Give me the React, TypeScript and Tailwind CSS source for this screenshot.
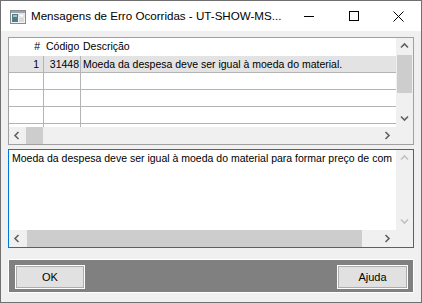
import React from "react";

const FONT = "font-['Liberation_Sans',Arial,sans-serif]";

type Dir = "up" | "down" | "left" | "right";

function Chevron({ dir, disabled = false }: { dir: Dir; disabled?: boolean }) {
  const color = disabled ? "#c1c1c1" : "#606060";
  const paths: Record<Dir, string> = {
    up: "M1 5.5 L4.5 2 L8 5.5",
    down: "M1 2.5 L4.5 6 L8 2.5",
    left: "M5.5 1 L2 4.5 L5.5 8",
    right: "M2.5 1 L6 4.5 L2.5 8",
  };
  return (
    <svg width="9" height="9" viewBox="0 0 9 9" aria-hidden>
      <path d={paths[dir]} fill="none" stroke={color} strokeWidth="1.6" />
    </svg>
  );
}

function ArrowBox({ dir, disabled }: { dir: Dir; disabled?: boolean }) {
  return (
    <div className="flex h-[17px] w-[17px] shrink-0 items-center justify-center">
      <Chevron dir={dir} disabled={disabled} />
    </div>
  );
}

function AppIcon() {
  return (
    <svg width="16" height="14" viewBox="0 0 16 14" aria-hidden>
      <rect x="0.5" y="0.5" width="15" height="13" fill="#f4f4f4" stroke="#8a8a8a" />
      <rect x="1" y="1" width="14" height="2" fill="#9aa4ad" />
      <rect x="2" y="4" width="6" height="8" fill="#4f7f86" />
      <rect x="3" y="5" width="4" height="2" fill="#9fc0c4" />
      <rect x="9" y="4" width="5" height="3" fill="#ffffff" stroke="#b8b8b8" strokeWidth="0.5" />
      <rect x="9" y="8" width="5" height="4" fill="#d9d9d9" />
    </svg>
  );
}

const rows = [
  { n: "1", code: "31448", desc: "Moeda da despesa deve ser igual à moeda do material." },
  null,
  null,
  null,
  null,
];

export default function App() {
  return (
    <div
      className={`flex h-[303px] w-[422px] flex-col border border-[#707070] bg-[#f0f0f0] text-black ${FONT}`}
    >
      {/* barra de título */}
      <div className="flex h-[30px] shrink-0 items-center bg-white">
        <div className="pl-[9px] pt-[1px]">
          <AppIcon />
        </div>
        <span className="ml-[5px] flex-1 whitespace-nowrap text-[11.6px]">
          Mensagens de Erro Ocorridas - UT-SHOW-MS...
        </span>
        <div className="flex h-[29px] w-[45px] items-center justify-center">
          <div className="h-px w-[10px] bg-black" />
        </div>
        <div className="flex h-[29px] w-[45px] items-center justify-center">
          <div className="h-[10px] w-[10px] border border-black" />
        </div>
        <div className="flex h-[29px] w-[45px] items-center justify-center">
          <svg width="11" height="11" viewBox="0 0 11 11" aria-hidden>
            <path d="M0.5 0.5 L10.5 10.5 M10.5 0.5 L0.5 10.5" stroke="#000" strokeWidth="1" />
          </svg>
        </div>
      </div>

      <div className="flex flex-1 flex-col px-[7px] pt-[6px]">
        {/* grade de erros */}
        <div className="flex h-[108px] shrink-0 border border-[#a0a0a0] bg-white text-[10.5px]">
          <div className="flex min-w-0 flex-1 flex-col">
            <div className="flex-1 overflow-hidden">
              <div className="flex h-[18px] items-center">
                <div className="w-[35px] pr-[4px] text-right">#</div>
                <div className="w-[37px] pl-[2px]">Código</div>
                <div className="flex-1 pl-[2px]">Descrição</div>
              </div>
              {rows.map((r, i) => (
                <div
                  key={i}
                  className={`flex h-[17px] items-center border-b border-[#b4b4b4] ${
                    r ? "bg-[#e3e3e3]" : ""
                  }`}
                >
                  <div className="h-full w-[35px] border-r border-[#b4b4b4] pr-[4px] text-right leading-[16px]">
                    {r?.n}
                  </div>
                  <div className="h-full w-[37px] border-r border-[#b4b4b4] pr-[1px] text-right leading-[16px]">
                    {r?.code}
                  </div>
                  <div className="h-full flex-1 whitespace-nowrap pl-[2px] leading-[16px]">
                    {r?.desc}
                  </div>
                </div>
              ))}
            </div>
            <div className="flex h-[17px] shrink-0 bg-[#f0f0f0]">
              <ArrowBox dir="left" />
              <div className="h-[17px] w-[17px] bg-[#cdcdcd]" />
              <div className="flex-1" />
              <ArrowBox dir="right" />
            </div>
          </div>
          <div className="flex w-[17px] shrink-0 flex-col bg-[#f0f0f0]">
            <ArrowBox dir="up" />
            <div className="mx-[1px] h-[38px] bg-[#cdcdcd]" />
            <div className="flex-1" />
            <ArrowBox dir="down" />
            <div className="h-[17px]" />
          </div>
        </div>

        {/* memo com a mensagem */}
        <div className="mt-[4px] flex h-[99px] shrink-0 border border-[#0078d7] bg-white text-[10.5px]">
          <div className="flex min-w-0 flex-1 flex-col">
            <div className="flex-1 overflow-hidden whitespace-nowrap pl-[3px] pt-[2px] leading-[13px]">
              Moeda da despesa deve ser igual à moeda do material para formar preço de com
            </div>
            <div className="flex h-[17px] shrink-0 bg-[#f0f0f0]">
              <ArrowBox dir="left" />
              <div className="ml-[1px] h-[17px] w-[335px] bg-[#cdcdcd]" />
              <div className="flex-1" />
              <ArrowBox dir="right" />
            </div>
          </div>
          <div className="flex w-[17px] shrink-0 flex-col bg-[#f0f0f0]">
            <ArrowBox dir="up" disabled />
            <div className="flex-1" />
            <ArrowBox dir="down" disabled />
            <div className="h-[17px]" />
          </div>
        </div>

        {/* painel de botões */}
        <div className="mt-[11px] flex h-[34px] shrink-0 items-start justify-between border border-white bg-[#808080] pl-[6px] pr-[5px] pt-[5px]">
          <button className="h-[24px] w-[70px] border border-white bg-[#e1e1e1] text-[11px] shadow-[inset_0_0_0_1px_#adadad]">
            OK
          </button>
          <button className="h-[24px] w-[71px] border border-white bg-[#e1e1e1] text-[11px] shadow-[inset_0_0_0_1px_#adadad]">
            Ajuda
          </button>
        </div>
      </div>
    </div>
  );
}
